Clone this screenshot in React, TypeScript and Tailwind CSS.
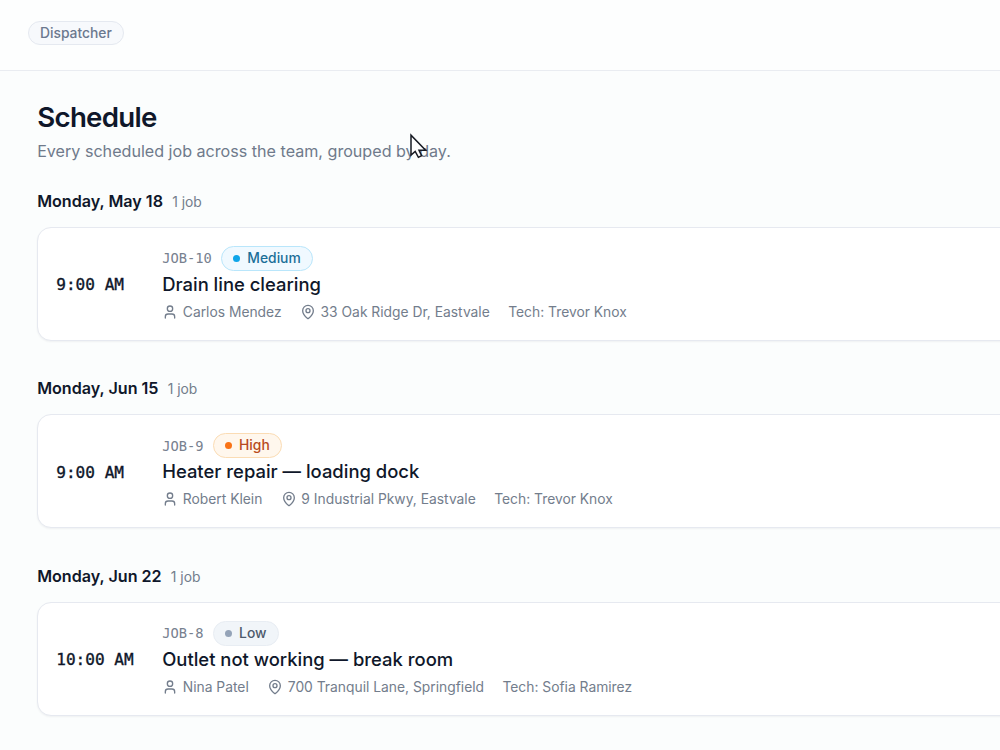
import { MapPin, User } from "lucide-react";

interface Job {
  id: string;
  time: string;
  priority: "Low" | "Medium" | "High";
  title: string;
  customer: string;
  address: string;
  tech: string;
}

const days: { label: string; jobs: Job[] }[] = [
  {
    label: "Monday, May 18",
    jobs: [
      {
        id: "JOB-10",
        time: "9:00 AM",
        priority: "Medium",
        title: "Drain line clearing",
        customer: "Carlos Mendez",
        address: "33 Oak Ridge Dr, Eastvale",
        tech: "Trevor Knox",
      },
    ],
  },
  {
    label: "Monday, Jun 15",
    jobs: [
      {
        id: "JOB-9",
        time: "9:00 AM",
        priority: "High",
        title: "Heater repair — loading dock",
        customer: "Robert Klein",
        address: "9 Industrial Pkwy, Eastvale",
        tech: "Trevor Knox",
      },
    ],
  },
  {
    label: "Monday, Jun 22",
    jobs: [
      {
        id: "JOB-8",
        time: "10:00 AM",
        priority: "Low",
        title: "Outlet not working — break room",
        customer: "Nina Patel",
        address: "700 Tranquil Lane, Springfield",
        tech: "Sofia Ramirez",
      },
    ],
  },
];

const badgeStyles = {
  Low: { badge: "border-[#e8edf3] bg-[#f1f5f9] text-[#4d5a6c]", dot: "bg-[#94a3b8]" },
  Medium: { badge: "border-[#b9e6fb] bg-[#f0f9ff] text-[#1b6f98]", dot: "bg-[#0ea5e9]" },
  High: { badge: "border-[#fbdcb4] bg-[#fff7ed] text-[#b84a20]", dot: "bg-[#f97316]" },
};

const PriorityBadge = ({ priority }: { priority: Job["priority"] }) => (
  <span
    className={`flex h-[25px] items-center gap-[7px] rounded-full border px-[11.3px] text-[13.83px] font-medium ${badgeStyles[priority].badge}`}
  >
    <span className={`size-[7px] rounded-full ${badgeStyles[priority].dot}`} />
    {priority}
  </span>
);

const JobCard = ({ job }: { job: Job }) => (
  <div className="flex h-[114px] items-center rounded-[14px] border border-[#e6e9f0] bg-white px-[18px] shadow-[0_1px_2px_rgba(15,23,42,0.05)]">
    <div className="w-[106px] shrink-0 pt-[3px] font-['DejaVu_Sans_Mono',monospace] text-[16.1px] text-[#0f172a] [-webkit-text-stroke:0.35px_#0f172a]">
      {job.time}
    </div>
    <div>
      <div className="flex items-center gap-[9.2px]">
        <span className="pt-px font-['DejaVu_Sans_Mono',monospace] text-[13.75px] text-[#78818f]">
          {job.id}
        </span>
        <PriorityBadge priority={job.priority} />
      </div>
      <h3 className="text-[18.43px] leading-[27px] font-medium text-[#0f172a]">{job.title}</h3>
      <div className="mt-1 flex items-center gap-[18.4px] text-[13.83px] leading-5 text-[#737d8c]">
        <span className="flex items-center gap-[4.6px]">
          <User className="size-4" />
          {job.customer}
        </span>
        <span className="flex items-center gap-[4.6px]">
          <MapPin className="size-4" />
          {job.address}
        </span>
        <span>Tech: {job.tech}</span>
      </div>
    </div>
  </div>
);

const App = () => {
  return (
    <div className="relative h-[750px] w-[1000px] overflow-hidden bg-[#fbfdfd] font-[Inter,sans-serif]">
      <header className="h-[71px] border-b border-[#e9ecf1] bg-[#fdfefe] pt-[21px] pl-7">
        <span className="flex h-6 w-fit items-center rounded-full border border-[#e5e9f0] bg-[#f7f9fc] px-[11px] text-[13.83px] font-medium text-[#6b788e]">
          Dispatcher
        </span>
      </header>

      <main className="w-[1100px] pt-7 pl-[37.2px]">
        <h1 className="text-[27.65px] leading-9 font-semibold tracking-[-0.69px] text-[#0f172a]">
          Schedule
        </h1>
        <p className="mt-[5px] text-[16.13px] leading-[23px] text-[#6f7a8b]">
          Every scheduled job across the team, grouped by day.
        </p>

        <div className="mt-[26.8px] flex flex-col gap-[36.5px]">
          {days.map((day) => (
            <section key={day.label}>
              <div className="mb-[14px] flex h-[23px] items-baseline gap-[9.2px] leading-[23px]">
                <h2 className="text-[16.13px] font-semibold text-[#0f172a]">{day.label}</h2>
                <span className="text-[13.83px] text-[#737d8c]">{day.jobs.length} job</span>
              </div>
              {day.jobs.map((job) => (
                <JobCard key={job.id} job={job} />
              ))}
            </section>
          ))}
        </div>
      </main>

      {/* cursor */}
      <svg
        className="absolute top-[133px] left-[409px]"
        width="20"
        height="27"
        viewBox="0 0 20 27"
        fill="#fff"
        stroke="#171b24"
        strokeWidth="1.5"
      >
        <path d="M2 2.2V22L6.2 18.4L9.4 24.3L12.6 22.6L10 17.2H16.6Z" />
      </svg>
    </div>
  );
};

export default App;
